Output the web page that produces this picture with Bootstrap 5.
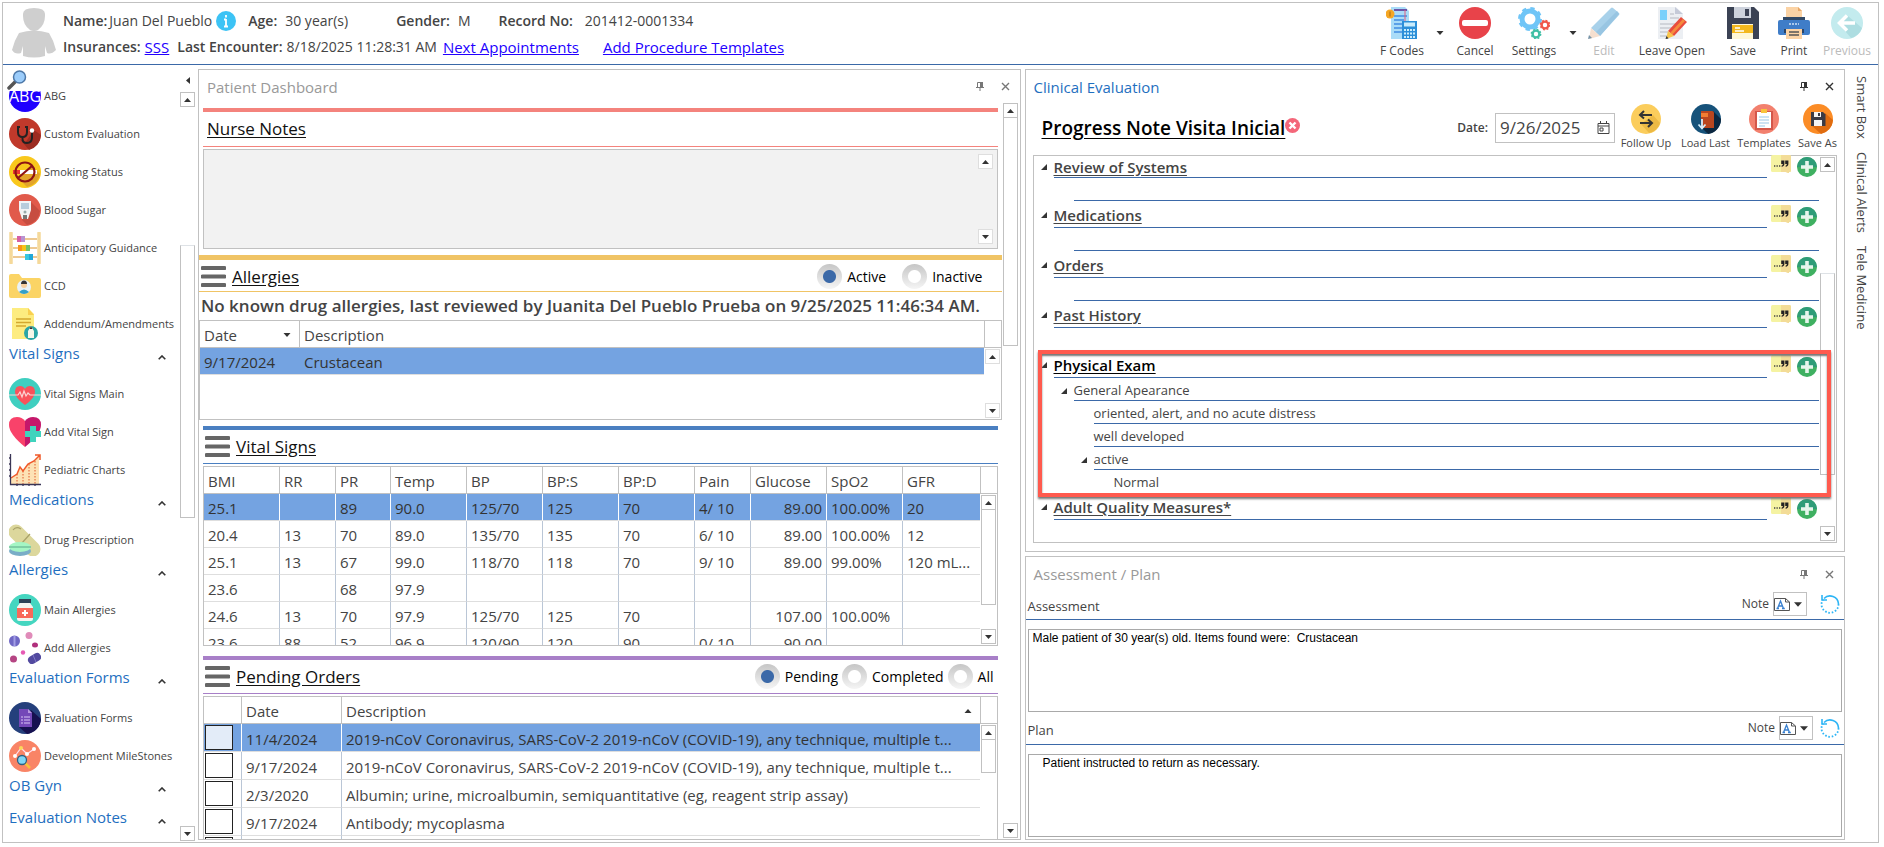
<!DOCTYPE html>
<html lang="en">
<head>
<meta charset="utf-8">
<meta name="viewport" content="width=device-width, initial-scale=1">
<title>Clinical Evaluation</title>
<link href="https://cdn.jsdelivr.net/npm/bootstrap@5.3.0/dist/css/bootstrap.min.css" rel="stylesheet">
<style>
:root{--edge:#c1c1c1;--rule:#3b69a8;--sel:#74a3e1;--ink:#444}
body{font-family:"Open Sans","Noto Sans",sans-serif;font-size:15px;line-height:20px;color:var(--ink);background:#fff}
button{color:inherit;background:none;border:0;padding:0;font:inherit}
svg{display:block;flex:none}
.app{height:calc(100vh - 6px);margin:2px 5px 4px 2px;border:1px solid var(--edge);overflow:hidden}
.edge{border:1px solid var(--edge)}
.semi{font-weight:600}
/* header */
.topbar{height:62px;border-bottom:1px solid var(--rule)}
.patient{font-size:14px;white-space:nowrap;padding:5px 0 0 6px}
.patient a{color:#20f;font-size:15px}
.patient .line{height:26px}
.tools{display:grid;grid-template-columns:56px 20px 50px 68px 10px 52px 84px 58px 44px 62px}
.tools button{font-size:12px;line-height:16px;white-space:nowrap}
.tools .off{color:#bbb}
/* sidebar */
.side{width:195px}
.side-list{font-size:11px;line-height:14px;overflow:hidden}
.side-item{display:flex;align-items:center;gap:3px;height:38px;padding-left:6px;color:var(--ink);text-decoration:none;white-space:nowrap}
.side-head{display:flex;width:100%;height:32px;padding:0 14px 0 6px;justify-content:space-between;color:#1f6fc0;font-size:15px;line-height:20px}
.side-head svg{margin-top:12px}
.scrolled{margin-top:-14px}
/* scroll bars */
.sbar{width:15px;display:flex;flex-direction:column}
.sbar button{height:15px;border:1px solid var(--edge);display:flex;align-items:center;justify-content:center;background:#fff}
.thumb{border:1px solid var(--edge);border-top:0;background:#fff}
.sbar.faint button{border-color:#dedede}
/* dashboard */
.panel-title{height:33px;padding:0 10px 0 8px;display:flex;align-items:center;color:#999}
.panel-title .tool-x{margin-left:17px}
.panel-title.on{color:#1f6fc0}.panel-title.on button{color:#333}
.panel-title button{color:#777}
.sec{margin:0 4px}
.bar-top{height:4px}
.sec-title{height:34px;border-bottom:1px solid;display:flex;align-items:center}
.sec-title h2{font-size:17px;line-height:22px;margin:0;color:#111;font-weight:400;text-decoration:underline;text-underline-offset:2px}
.sec-title svg{margin:0 6px 0 2px}
.sec-title label{color:#000;font-size:14px;margin-left:5px}
.ring{appearance:none;width:25px;height:25px;border-radius:50%;margin:0;background:radial-gradient(circle,#fff 0 6px,transparent 7px),linear-gradient(#c6c6c6,#f5f5f5)}
.ring:checked{background:radial-gradient(circle,#3b69a8 0 6px,transparent 7px),linear-gradient(#c6c6c6,#f5f5f5)}
.c-red{color:#f4837d}.b-red{background:#f4837d}
.c-gold{color:#f0c465}.b-gold{background:#f0c465;height:5px}
.c-blue{color:#4a7fc1}.b-blue{background:#4a7fc1}
.c-violet{color:#a87fc8}.b-violet{background:#a87fc8}
.notes{height:100px;background:#f2f2f2;margin-top:2px}
.notes textarea{resize:none;background:none;border:0;outline:0}
.data-grid{table-layout:fixed;margin:0;color:var(--ink);border-collapse:separate;border-spacing:0}
.data-grid>:not(caption)>*>*{padding:2px 4px 0;height:27px;line-height:22px;border:0;border-bottom:1px solid #dedede;border-right:1px solid #bac6d6;white-space:nowrap;overflow:hidden;background:none;color:inherit;box-shadow:none;font-weight:400;vertical-align:middle}
.data-grid>thead>tr>th{border-color:var(--edge)!important}
.data-grid>:not(caption)>*>:last-child{border-right:0}
.data-grid .picked{background:var(--sel);color:#333}
.data-grid .picked>*{border-right-color:#fff!important}
.sb-col{width:17px;flex:none;display:flex;flex-direction:column;align-items:center}
.sb-head{height:27px;width:100%;border:solid var(--edge);border-width:0 0 1px 1px}
.plain-rows td{border-right:0!important}
.orders>tbody>tr>*{height:28px!important}
.orders .pick{padding:0 0 0 1px!important}
.pick input{appearance:none;display:block;width:28px;height:25px;border:1px solid #222;background:#fff;margin:0}
.picked .pick input{background:#e3ecf8}
/* evaluation */
.note-row{height:52px;padding:0 3px 3px 16px}
.note-title{font-size:19px;line-height:24px;margin:0;color:#000;font-weight:600;text-decoration:underline;text-underline-offset:3px}
.date-box{width:120px;height:30px}
.date-box input{width:100%;min-width:0;border:0;outline:0;padding:0 0 0 4px;font-size:17px;color:var(--ink)}
.mini button{font-size:11px;line-height:16px;white-space:nowrap;display:flex;flex-direction:column;align-items:center;gap:1px}
.tree{position:relative;height:388px}
.tree ul{list-style:none;margin:0;padding:0}
.node-h{height:27px;display:flex;padding-left:7px}
.node-h h3{font-size:15px;line-height:20px;font-weight:600;color:var(--ink);margin:0;text-decoration:underline;text-underline-offset:2px}
.node-line{flex:1;border-bottom:1px solid var(--rule);margin:0 4px 0 7px;display:flex;align-items:center;padding-top:2px}
.node-h .tri{align-self:center}
.node-h .acts{display:flex;gap:6px;align-items:flex-end;width:48px;padding-bottom:1px}
.node-h.first{height:22px}
.node-h.first .node-line{padding-top:0}
.node-h.first h3{line-height:18px}
.node{height:23px;display:flex;align-items:center;font-size:13px}
.node .tri{margin-top:3px}
.node .ln{flex:1;align-self:stretch;margin-left:7px;border-bottom:1px solid var(--rule);line-height:24px}
.lv1{padding-left:40px}.lv1.tw{padding-left:27px}
.lv2{padding-left:60px}.lv2.tw{padding-left:47px}
.lv3{padding-left:80px}
.lv1:not(.tw) .ln,.lv2:not(.tw) .ln,.lv3 .ln{margin-left:0}
.node .bare{border:0}
.focus-group{position:relative}
.focus-frame{position:absolute;inset:-1px -12px -4px 4px;border:4px solid #ff5a4e;box-shadow:0 2px 2px #777,inset 0 2px 2px #777;pointer-events:none}
/* assessment */
.ap-head{border-bottom:1px solid var(--rule);font-size:13px;padding:0 4px 0 2px}
.ap-box{height:83px;margin:9px 2px 0;border:1px solid #a9a9a9;display:flex}
.ap-box textarea{resize:none;border:0;outline:0;width:100%;font:12px/14px "Liberation Sans",Arial,sans-serif;color:#000;padding:1px 4px;overflow:hidden}
.pickfont{height:24px;width:34px}
.tabs-v{width:33px;writing-mode:vertical-rl;font-size:13px;line-height:33px;gap:13px;padding-top:11px}
</style>
</head>
<body>
<svg width="0" height="0" class="position-absolute" aria-hidden="true">
<defs>
<symbol id="up" viewBox="0 0 7 4"><path d="M0 4h7L3.500 0z" fill="#333"/></symbol>
<symbol id="dn" viewBox="0 0 7 4"><path d="M0 0h7L3.500 4z" fill="#333"/></symbol>
<symbol id="chev" viewBox="0 0 8 5"><path d="M.7 4.300 4 1l3.300 3.300" fill="none" stroke="#333" stroke-width="1.600"/></symbol>
<symbol id="pin" viewBox="0 0 8 9"><path d="M1.500.5h5v5h-5zM0 5.500h8M4 6v3" fill="none" stroke="currentColor"/><path d="M4 0h3v5H4z" fill="currentColor"/></symbol>
<symbol id="ex" viewBox="0 0 9 9"><path d="M1 1l7 7M8 1 1 8" fill="none" stroke="currentColor" stroke-width="1.400"/></symbol>
<symbol id="burger" viewBox="0 0 25 21"><path d="M1.500 2h22M1.500 10.500h22M1.500 19h22" stroke="#666" stroke-width="4" stroke-linecap="round"/></symbol>
<symbol id="tri" viewBox="0 0 6 6"><path d="M6 0v6H0z" fill="#333"/></symbol>
<symbol id="note" viewBox="0 0 20 18"><rect width="20" height="17" rx="1.500" fill="#f5f3a2"/><path d="M10 0h8.500Q20 0 20 1.500v14q0 1.500-1.500 1.500H18v1.500L14.500 17H10z" fill="#f3dc97"/><path d="M3 11h1.300M5.500 11h1.300M8 11h1.300" stroke="#444" stroke-width="1.300"/><path d="M10.200 5.500h3.200v3.200q0 2.600-2.800 3.100v-1.100q1.300-.4 1.300-1.700h-1.700zM14.200 5.500h3.200v3.200q0 2.600-2.800 3.100v-1.100q1.300-.4 1.300-1.700h-1.700z" fill="#222"/></symbol>
<symbol id="plus" viewBox="0 0 20 20"><circle cx="10" cy="10" r="10" fill="#3fb061"/><path d="M0 10a10 10 0 0 1 20 0z" fill="#2f9c78"/><path d="M10 4v12M4 10h12" stroke="#e6f5ec" stroke-width="3.600"/></symbol>
<symbol id="redo" viewBox="0 0 20 20"><path d="M4 4.500A8.500 8.500 0 0 1 18.500 10" fill="none" stroke="#2eb5f5" stroke-width="1.600"/><path d="M18.500 10A8.500 8.500 0 1 1 3 5.500" fill="none" stroke="#2eb5f5" stroke-width="1.800" stroke-dasharray="1.600 1.800"/><path d="M2 1v5h5" fill="none" stroke="#2eb5f5" stroke-width="1.600"/></symbol>
<symbol id="fontpg" viewBox="0 0 16 13"><path d="M.5.500h11l4 3.500v8.500H.5z" fill="#fff" stroke="#555"/><path d="M11.500.5V4h4" fill="none" stroke="#555"/><path d="M3.500 10.500 6.500 3l3 7.500M4.700 8h3.600M2.500 10.500h2.500M8 10.500h2.800" fill="none" stroke="#3a80cf" stroke-width="1.300"/></symbol>
</defs>
</svg>
<div class="app d-flex flex-column">
<header class="topbar d-flex flex-shrink-0">
<svg class="ms-2 mt-1" width="46" height="52" viewBox="0 0 46 52"><path d="M12 7q0-6 11-6t11 6v2q0 9-7 14-4 2-8 0-7-5-7-14z" fill="#cfcfcf"/><path d="M8 26q15-5 30 0 5 8 7 17-5 5-9 3l-2-7v10q-11 3-22 0V39l-2 7Q4 48 1 43 3 34 8 26z" fill="#cfcfcf"/></svg>
<div class="patient">
<div class="line d-flex align-items-center"><span class="semi">Name:</span><span style="margin-left:2px">Juan Del Pueblo</span>
<svg class="ms-1" width="20" height="20" viewBox="0 0 20 20"><circle cx="10" cy="10" r="10" fill="#3cc3f5"/><path d="M10 4v2.500M10 8v7.500M8 8.500h2M8 15.500h4" stroke="#fff" stroke-width="1.800"/></svg>
<span class="semi ms-2 ps-1">Age:</span><span class="ms-2">30 year(s)</span>
<span class="semi ms-5">Gender:</span><span class="ms-2">M</span>
<span class="semi ms-4 ps-1">Record No:</span><span class="ms-2 ps-1">201412-0001334</span></div>
<div class="line d-flex align-items-center"><span class="semi">Insurances:</span><a class="ms-1" href="#">SSS</a><span class="semi ms-2">Last Encounter:</span><span class="ms-1">8/18/2025 11:28:31 AM</span><a style="margin-left:6px" href="#">Next Appointments</a><a class="ms-4" href="#">Add Procedure Templates</a></div>
</div>
<nav class="tools ms-auto align-items-start pt-1" aria-label="Actions">
<button class="d-flex flex-column align-items-center gap-1"><svg width="32" height="32" viewBox="0 0 32 32"><path d="M5 0h14l4 4v28H5z" fill="#a9dcf8"/><path d="M8 2h13v2H8z" fill="#6a55a8"/><path d="M8 9h13M8 13h10M8 17h8M8 21h8M8 25h8" stroke="#5aa0e8" stroke-width="2"/><path d="M19 3v14" stroke="#e05f80"/><circle cx="4" cy="7" r="4.500" fill="#f5a623"/><path d="M4 4.500v5" stroke="#a86a10"/><path d="M16 14h15v18H16z" fill="#2c8fd8"/><path d="M18 15.500h11v4H18z" fill="#c9ecfc"/><path d="M18 23h11M18 26.500h11M18 30h11" stroke="#c9ecfc" stroke-width="2" stroke-dasharray="2 1"/></svg>F Codes</button>
<button aria-label="More codes"><svg class="mx-auto mt-4" width="8" height="4"><use href="#dn"/></svg></button>
<button class="d-flex flex-column align-items-center gap-1"><svg width="32" height="32" viewBox="0 0 32 32"><circle cx="16" cy="16" r="16" fill="#e8434a"/><rect x="3" y="13" width="26" height="6" rx="2" fill="#fff"/></svg>Cancel</button>
<button class="d-flex flex-column align-items-center gap-1"><svg width="32" height="32" viewBox="0 0 32 32"><g fill="none"><circle cx="12" cy="12" r="8" stroke="#6fc5f7" stroke-width="5"/><circle cx="12" cy="12" r="10.500" stroke="#6fc5f7" stroke-width="3" stroke-dasharray="4.200 4.050"/><circle cx="27" cy="18" r="3.400" stroke="#f0574a" stroke-width="2.400"/><circle cx="27" cy="18" r="4.700" stroke="#f0574a" stroke-width="1.400" stroke-dasharray="1.850 1.840"/><circle cx="18" cy="27" r="3.400" stroke="#40bfa5" stroke-width="2.400"/><circle cx="18" cy="27" r="4.700" stroke="#40bfa5" stroke-width="1.400" stroke-dasharray="1.850 1.840"/></g></svg>Settings</button>
<button aria-label="More settings"><svg class="mx-auto mt-4" width="8" height="4"><use href="#dn"/></svg></button>
<button class="off d-flex flex-column align-items-center gap-1" disabled><svg width="32" height="32" viewBox="0 0 32 32"><path d="M3 21 23 1q1-1 2 0l6 5q1 1 0 2L12 29z" fill="#a8d1ea"/><path d="m8 25 21-21 2 3-19 22z" fill="#98c5e2"/><path d="m3 21 9 8-11 3z" fill="#f5dfcf"/><path d="m1 28 3 3-4 1z" fill="#7593a8"/></svg>Edit</button>
<button class="d-flex flex-column align-items-center gap-1"><svg width="32" height="32" viewBox="0 0 32 32"><path d="M2 0h18l7 7v25H2z" fill="#eceff3"/><path d="M19 0l8 7h-8z" fill="#c5cad8"/><path d="M4 3h7v10H4z" fill="#7ad0fb"/><path d="M14 7h4M14 11h9M4 17h16M4 21h13M4 25h8M4 29h7" stroke="#c8cbd2" stroke-width="1.500"/><path d="M12 24 25 10l6 5-13 14z" fill="#e84c3d"/><path d="m14 26 13-14 2 2-13 14z" fill="#f58b3d"/><path d="m12 24 6 5-8 3z" fill="#f8c54a"/><path d="m10.500 29 2 2.500-3 .5z" fill="#333"/></svg>Leave Open</button>
<button class="d-flex flex-column align-items-center gap-1"><svg width="32" height="32" viewBox="0 0 32 32"><path d="M0 0h27l5 5v27H0z" fill="#3b4254"/><path d="M7 0h17v11H7z" fill="#cdd2dc"/><path d="M18 2h4v7h-4z" fill="#3b4254"/><path d="M5 17h21v15H5z" fill="#fff7d6"/><path d="M5 18h21v8H5z" fill="#f3b81d"/><path d="M8 21h5M8 24h9" stroke="#fff" stroke-width="1.500"/></svg>Save</button>
<button class="d-flex flex-column align-items-center gap-1"><svg width="32" height="32" viewBox="0 0 32 32"><path d="M8 0h12l4 4v10H8z" fill="#fbd3a5"/><path d="M20 0v4h4z" fill="#e8a868"/><path d="M5 10h22v5H5z" fill="#334a66"/><path d="M2 13h28q2 0 2 2v11q0 2-2 2H2q-2 0-2-2V15q0-2 2-2z" fill="#3f7dc8"/><path d="M6 22h20v4H6z" fill="#2a4468"/><path d="M8 22h16v10H8z" fill="#fbd3a5"/><path d="M11 25h10M11 28h10" stroke="#555" stroke-width="1.500"/><path d="M11 17h10" stroke="#cfe2f7" stroke-width="1.500" stroke-dasharray="2 1"/></svg>Print</button>
<button class="off d-flex flex-column align-items-center gap-1" disabled><svg width="32" height="32" viewBox="0 0 32 32"><circle cx="16" cy="16" r="16" fill="#c3ebee"/><path d="m17 9 14 12a16 16 0 0 1-11 10L8 17z" fill="#addde1"/><path d="M24 16H9M16 8.500 8.500 16l7.500 7.500" fill="none" stroke="#fff" stroke-width="3.500"/></svg>Previous</button>
</nav>
</header>

<div class="d-flex flex-fill" style="min-height:0">
<aside class="side d-flex flex-column flex-shrink-0">
<div class="d-flex justify-content-between ps-1 pt-1 flex-shrink-0" style="height:26px">
<button aria-label="Search"><svg width="20" height="20" viewBox="0 0 20 20"><path d="m2 18 6-6" stroke="#555" stroke-width="3.500" stroke-linecap="round"/><circle cx="12.500" cy="7" r="6" fill="#9ccdfb" stroke="#4d78a8" stroke-width="1.500"/></svg></button>
<button class="pe-2" aria-label="Collapse"><svg width="4" height="7" viewBox="0 0 4 7"><path d="M4 0v7L0 3.500z" fill="#333"/></svg></button>
</div>
<div class="d-flex flex-fill" style="min-height:0">
<nav class="side-list flex-fill"><div class="scrolled">
<a class="side-item" href="#"><svg width="32" height="32" viewBox="0 0 32 32"><circle cx="16" cy="16" r="16" fill="#1f00ff"/><text x="16" y="22" text-anchor="middle" font-size="16" fill="#fff">ABG</text></svg>ABG</a>
<a class="side-item" href="#"><svg width="32" height="32" viewBox="0 0 32 32"><circle cx="16" cy="16" r="16" fill="#c0392b"/><path d="m10 20 6 5 9-13 7 5a16 16 0 0 1-12 15z" fill="#9c2c21"/><path d="M11 9H9v5q0 5 4.500 5T18 14V9h-2M13.500 19v2q0 4 4.500 4t5-5v-6" fill="none" stroke="#222" stroke-width="2"/><circle cx="23" cy="12.500" r="2.200" fill="#fff"/></svg>Custom Evaluation</a>
<a class="side-item" href="#"><svg width="32" height="32" viewBox="0 0 32 32"><circle cx="16" cy="16" r="16" fill="#f9c81c"/><path d="m22 9 9 9a16 16 0 0 1-13 13l-8-8z" fill="#e2a42a"/><path d="M4 14h7v4H4z" fill="#e33"/><path d="M11 14h17v4H11z" fill="#fff"/><g fill="none" stroke="#8e1414" stroke-width="2.200"><circle cx="16" cy="16" r="9.500"/><path d="m9 22 14-12"/></g></svg>Smoking Status</a>
<a class="side-item" href="#"><svg width="32" height="32" viewBox="0 0 32 32"><circle cx="16" cy="16" r="16" fill="#e15a4b"/><path d="m22 8 9 9a16 16 0 0 1-13 14l-5-5z" fill="#c74d40"/><path d="M10 7h12v9l-3 9h-6l-3-9z" fill="#f2f3f5"/><path d="M12 9h8v6h-8z" fill="#b8ccdc"/><circle cx="16" cy="18" r="1.500" fill="#9aa"/><path d="M14 21h4v4h-4z" fill="#777"/></svg>Blood Sugar</a>
<a class="side-item" href="#"><svg width="32" height="32" viewBox="0 0 32 32"><path d="M2 1v30M30 1v30" stroke="#f5d99a" stroke-width="3.500" stroke-linecap="round"/><path d="M4 7h24M4 16h24M4 25h24" stroke="#e8b870" stroke-width="1.500"/><path d="M8 4h4v6H8z" fill="#d65fa5"/><path d="M12 4h4v6h-4z" fill="#b893d0"/><path d="M9 13h4v6H9z" fill="#f7941d"/><path d="M13 13h4v6h-4z" fill="#f5c518"/><path d="M17 13h4v6h-4z" fill="#75c26a"/><path d="M16 22h4v6h-4z" fill="#38c6e0"/><path d="M20 22h4v6h-4z" fill="#20a8d8"/></svg>Anticipatory Guidance</a>
<a class="side-item" href="#"><svg width="32" height="32" viewBox="0 0 32 32"><path d="M0 6q0-2 2-2h8l3 4h17q2 0 2 2v16q0 2-2 2H2q-2 0-2-2z" fill="#fbd465"/><circle cx="15" cy="17" r="7" fill="#e8f2f7"/><circle cx="15" cy="15" r="3" fill="#f5cfa0"/><path d="M12 14q0-3.500 3-3.500t3 3.500z" fill="#333"/><path d="M10 22q5-5 10 0-5 4-10 0z" fill="#36a0c8"/></svg>CCD</a>
<a class="side-item" href="#"><svg width="32" height="32" viewBox="0 0 32 32"><path d="M3 0h16l6 6v25H3z" fill="#fdec80"/><path d="M19 0v7h6z" fill="#f9cf50"/><path d="M7 11h15M7 14.500h15M7 18h10" stroke="#d3a82e" stroke-width="1.500"/><circle cx="22" cy="25" r="7" fill="#2aa5a5"/><path d="m22 18 3 5v7h-6v-7z" fill="#f6f6e8"/><path d="m22 18 1.500 3h-3z" fill="#333"/></svg>Addendum/Amendments</a>
<button class="side-head">Vital Signs<svg width="8" height="5"><use href="#chev"/></svg></button>
<a class="side-item" href="#"><svg width="32" height="32" viewBox="0 0 32 32"><circle cx="16" cy="16" r="16" fill="#3fcfc0"/><path d="M16 27Q6 20 6 14q0-6 5-6 3.500 0 5 3 1.500-3 5-3 5 0 5 6 0 6-10 13z" fill="#f9525b"/><path d="M0 17h9l2-3 2 5 2-6 2 5 2-3 2 2h11" fill="none" stroke="#fbd5d5" stroke-width="1.200"/></svg>Vital Signs Main</a>
<a class="side-item" href="#"><svg width="32" height="32" viewBox="0 0 32 32"><path d="M16 31Q0 18 0 9q0-8 8-8 5 0 8 4z" fill="#f9426a"/><path d="M16 31q16-13 16-22 0-8-8-8-5 0-8 4z" fill="#c4176b"/><path d="M21 10h6v5h5v6h-5v5h-6v-5h-5v-6h5z" fill="#40d3bd"/></svg>Add Vital Sign</a>
<a class="side-item" href="#"><svg width="32" height="32" viewBox="0 0 32 32"><path d="m2 24 6-4 3-7 3 4 5-7 6-3 5-6v30H2z" fill="#fde2b5"/><path d="M8 20v10M14 17v13M20 10v20M26 7v23" stroke="#e05a2a" stroke-dasharray="1.500 1.500"/><path d="m2 24 6-4 3-7 3 4 5-7 6-3 6-6M26 1h5v5" fill="none" stroke="#f0592a" stroke-width="1.500"/><path d="M1.500 0v30.500H32M0 4h2M0 10h2M0 16h2M0 22h2M8 30v2M14 30v2M20 30v2M26 30v2" fill="none" stroke="#3a3556" stroke-width="1.300"/></svg>Pediatric Charts</a>
<button class="side-head">Medications<svg width="8" height="5"><use href="#chev"/></svg></button>
<a class="side-item" href="#"><svg width="32" height="32" viewBox="0 0 32 32"><path d="m7 8 17 17" stroke="#dcd79c" stroke-width="15" stroke-linecap="round"/><path d="m21 10-8 9M4 6q3-4 8-1" fill="none" stroke="#a8a268" stroke-width="1.200"/><ellipse cx="11" cy="27" rx="11" ry="5" fill="#79adc7"/><ellipse cx="11" cy="23" rx="11" ry="5" fill="#a4f5c4"/><path d="M0 23h22" stroke="#5aa888"/></svg>Drug Prescription</a>
<button class="side-head">Allergies<svg width="8" height="5"><use href="#chev"/></svg></button>
<a class="side-item" href="#"><svg width="32" height="32" viewBox="0 0 32 32"><circle cx="16" cy="16" r="16" fill="#45d6c0"/><path d="M10 5h12v4H10z" fill="#2f4257"/><path d="M11 9h10l3 4v12q0 2-2 2H10q-2 0-2-2V13z" fill="#f5f5f0"/><path d="M8 14h16v10H8z" fill="#f9695a"/><path d="M16 16v6M13 19h6" stroke="#fff" stroke-width="2"/></svg>Main Allergies</a>
<a class="side-item" href="#"><svg width="32" height="32" viewBox="0 0 32 32"><circle cx="5.500" cy="9" r="5.500" fill="#6f67c4"/><path d="M5.500 4v10" stroke="#a39fe5" stroke-width="2"/><circle cx="20" cy="3.500" r="3.500" fill="#e08bb9"/><ellipse cx="26" cy="13" rx="3" ry="2.500" fill="#b0307c"/><circle cx="14" cy="20.500" r="2.200" fill="#e65ab4"/><circle cx="4.500" cy="27" r="3.500" fill="#b54583"/><path d="m23 28 5-3" stroke="#524a9f" stroke-width="8" stroke-linecap="round"/><path d="m24 23 3 7" stroke="#8078c8"/></svg>Add Allergies</a>
<button class="side-head">Evaluation Forms<svg width="8" height="5"><use href="#chev"/></svg></button>
<a class="side-item" href="#"><svg width="32" height="32" viewBox="0 0 32 32"><circle cx="16" cy="16" r="16" fill="#25407c"/><path d="m22 8 10 9a16 16 0 0 1-14 15l-8-7z" fill="#161150"/><path d="M10 7h9l4 4v14H10z" fill="#7448b8"/><path d="M19 7v4h4z" fill="#b898e0"/><path d="M12 15h2M12 18h2M12 21h2M15 15h6M15 18h6M15 21h6" stroke="#d9c5f5"/></svg>Evaluation Forms</a>
<a class="side-item" href="#"><svg width="32" height="32" viewBox="0 0 32 32"><circle cx="16" cy="16" r="16" fill="#f98466"/><path d="m6 16 6-8 6 6 7-5" fill="none" stroke="#fde" stroke-width="1.200"/><g fill="#fff"><circle cx="6" cy="16" r="2"/><circle cx="18" cy="14" r="2"/><circle cx="25" cy="9" r="2"/></g><circle cx="12" cy="8" r="2" fill="#fcd95a"/><path d="m16 23 5 5" stroke="#f8c13a" stroke-width="2.500"/><circle cx="13" cy="20" r="4.500" fill="#7fd6f7" stroke="#2d5f80" stroke-width="1.300"/></svg>Development MileStones</a>
<button class="side-head">OB Gyn<svg width="8" height="5"><use href="#chev"/></svg></button>
<button class="side-head">Evaluation Notes<svg width="8" height="5"><use href="#chev"/></svg></button>
<a class="side-item" href="#" aria-label="Notes"><svg width="32" height="32" viewBox="0 0 32 32"><path d="M3 0h17v32H3z" fill="#fce98a"/></svg></a>
</div></nav>
<div class="sbar flex-shrink-0" style="margin:1px 3px 1px 0">
<button aria-label="Up"><svg width="7" height="4"><use href="#up"/></svg></button>
<div style="flex:139"></div><div class="thumb border-top" style="flex:272"></div><div style="flex:309"></div>
<button aria-label="Down"><svg width="7" height="4"><use href="#dn"/></svg></button></div>
</div>
</aside>

<main class="d-flex flex-fill gap-1" style="min-width:0;padding:4px 0 2px">
<section class="edge d-flex flex-column" style="flex:1 1 0;min-width:0">
<div class="panel-title flex-shrink-0"><span class="me-auto">Patient Dashboard</span><button aria-label="Pin"><svg width="8" height="9"><use href="#pin"/></svg></button><button class="tool-x" aria-label="Close"><svg width="9" height="9"><use href="#ex"/></svg></button></div>
<div class="d-flex flex-fill" style="min-height:0">
<div class="flex-fill overflow-hidden d-flex flex-column" style="min-width:0;padding-top:5px">
<div class="sec"><div class="bar-top b-red"></div><div class="sec-title c-red ps-1" style="height:35px"><h2>Nurse Notes</h2></div>
<div class="notes edge d-flex"><textarea class="flex-fill" aria-label="Nurse notes" readonly></textarea><div class="sbar faint justify-content-between m-1 my-1"><button aria-label="Up"><svg width="7" height="4"><use href="#up"/></svg></button><button aria-label="Down"><svg width="7" height="4"><use href="#dn"/></svg></button></div></div></div>
<div style="margin-top:6px"><div class="bar-top b-gold"></div><div class="sec-title c-gold" style="height:32px;padding-top:2px"><svg width="25" height="21"><use href="#burger"/></svg><h2 class="me-auto">Allergies</h2>
<input class="ring" type="radio" name="al" id="al1" checked><label for="al1" class="me-3">Active</label><input class="ring" type="radio" name="al" id="al2"><label for="al2" style="margin-right:19px">Inactive</label></div>
<div class="semi text-nowrap" style="font-size:17px;line-height:28px;padding-left:2px">No known drug allergies, last reviewed by Juanita Del Pueblo Prueba on 9/25/2025 11:46:34 AM.</div>
<div class="edge d-flex" style="height:100px"><div class="flex-fill"><table class="table data-grid plain-rows"><colgroup><col style="width:100px"><col></colgroup><thead><tr><th><span class="d-flex align-items-center justify-content-between pe-1">Date<svg width="8" height="4"><use href="#dn"/></svg></span></th><th>Description</th></tr></thead><tbody><tr class="picked"><td>9/17/2024</td><td>Crustacean</td></tr></tbody></table></div>
<div class="sb-col"><div class="sb-head"></div><div class="sbar faint flex-fill justify-content-between" style="padding:1px 0"><button aria-label="Up"><svg width="7" height="4"><use href="#up"/></svg></button><button aria-label="Down"><svg width="7" height="4"><use href="#dn"/></svg></button></div></div></div></div>
<div class="sec" style="margin-top:6px"><div class="bar-top b-blue"></div><div class="sec-title c-blue"><svg width="25" height="21"><use href="#burger"/></svg><h2>Vital Signs</h2></div>
<div class="edge d-flex overflow-hidden" style="height:180px;margin-top:2px"><div class="flex-fill"><table class="table data-grid"><colgroup><col style="width:76px"><col style="width:56px"><col style="width:55px"><col style="width:76px"><col style="width:76px"><col style="width:76px"><col style="width:76px"><col style="width:56px"><col style="width:76px"><col style="width:76px"><col style="width:77px"></colgroup>
<thead><tr><th>BMI</th><th>RR</th><th>PR</th><th>Temp</th><th>BP</th><th>BP:S</th><th>BP:D</th><th>Pain</th><th>Glucose</th><th>SpO2</th><th>GFR</th></tr></thead><tbody>
<tr class="picked"><td>25.1</td><td></td><td>89</td><td>90.0</td><td>125/70</td><td>125</td><td>70</td><td>4/ 10</td><td class="text-end">89.00</td><td>100.00%</td><td>20</td></tr>
<tr><td>20.4</td><td>13</td><td>70</td><td>89.0</td><td>135/70</td><td>135</td><td>70</td><td>6/ 10</td><td class="text-end">89.00</td><td>100.00%</td><td>12</td></tr>
<tr><td>25.1</td><td>13</td><td>67</td><td>99.0</td><td>118/70</td><td>118</td><td>70</td><td>9/ 10</td><td class="text-end">89.00</td><td>99.00%</td><td>120 mL...</td></tr>
<tr><td>23.6</td><td></td><td>68</td><td>97.9</td><td></td><td></td><td></td><td></td><td></td><td></td><td></td></tr>
<tr><td>24.6</td><td>13</td><td>70</td><td>97.9</td><td>125/70</td><td>125</td><td>70</td><td></td><td class="text-end">107.00</td><td>100.00%</td><td></td></tr>
<tr><td>23.6</td><td>88</td><td>52</td><td>96.9</td><td>120/90</td><td>120</td><td>90</td><td>0/ 10</td><td class="text-end">90.00</td><td></td><td></td></tr>
</tbody></table></div>
<div class="sb-col"><div class="sb-head flex-shrink-0"></div><div class="sbar flex-fill" style="padding:1px 0"><button aria-label="Up"><svg width="7" height="4"><use href="#up"/></svg></button><div class="thumb" style="flex:96"></div><div style="flex:24"></div><button aria-label="Down"><svg width="7" height="4"><use href="#dn"/></svg></button></div></div></div></div>
<div class="sec d-flex flex-column flex-fill" style="margin-top:10px;min-height:0"><div class="bar-top b-violet flex-shrink-0"></div><div class="sec-title c-violet flex-shrink-0"><svg width="25" height="21"><use href="#burger"/></svg><h2 class="me-auto">Pending Orders</h2>
<input class="ring" type="radio" name="po" id="po1" checked><label for="po1" class="me-1">Pending</label><input class="ring" type="radio" name="po" id="po2"><label for="po2" class="me-1" >Completed</label><input class="ring" type="radio" name="po" id="po3"><label for="po3" class="me-1">All</label></div>
<div class="edge border-bottom-0 d-flex overflow-hidden flex-fill" style="margin-top:2px;min-height:0"><div class="flex-fill"><table class="table data-grid orders"><colgroup><col style="width:38px"><col style="width:100px"><col></colgroup>
<thead><tr><th></th><th>Date</th><th><span class="d-flex align-items-center justify-content-between pe-1">Description<svg width="8" height="4"><use href="#up"/></svg></span></th></tr></thead><tbody>
<tr class="picked"><td class="pick"><input type="checkbox" aria-label="Select 11/4/2024"></td><td>11/4/2024</td><td>2019-nCoV Coronavirus, SARS-CoV-2 2019-nCoV (COVID-19), any technique, multiple t...</td></tr>
<tr><td class="pick"><input type="checkbox" aria-label="Select 9/17/2024"></td><td>9/17/2024</td><td>2019-nCoV Coronavirus, SARS-CoV-2 2019-nCoV (COVID-19), any technique, multiple t...</td></tr>
<tr><td class="pick"><input type="checkbox" aria-label="Select 2/3/2020"></td><td>2/3/2020</td><td>Albumin; urine, microalbumin, semiquantitative (eg, reagent strip assay)</td></tr>
<tr><td class="pick"><input type="checkbox" aria-label="Select 9/17/2024"></td><td>9/17/2024</td><td>Antibody; mycoplasma</td></tr>
<tr><td class="pick"><input type="checkbox" aria-label="Select order"></td><td></td><td></td></tr>
</tbody></table></div>
<div class="sb-col"><div class="sb-head flex-shrink-0"></div><div class="sbar" style="padding-top:1px"><button aria-label="Up"><svg width="7" height="4"><use href="#up"/></svg></button><div class="thumb" style="height:33px"></div></div></div></div></div>
</div>
<div class="sbar flex-shrink-0" style="margin:0 2px 1px 1px"><button aria-label="Up"><svg width="7" height="4"><use href="#up"/></svg></button><div class="thumb" style="flex:228"></div><div style="flex:478"></div><button aria-label="Down"><svg width="7" height="4"><use href="#dn"/></svg></button></div>
</div>
</section>

<div class="d-flex flex-column gap-1" style="flex:1 1 0;min-width:0">
<section class="edge" style="height:483px">
<div class="panel-title on" ><span class="me-auto">Clinical Evaluation</span><button aria-label="Pin"><svg width="8" height="9"><use href="#pin"/></svg></button><button class="tool-x" aria-label="Close"><svg width="9" height="9"><use href="#ex"/></svg></button></div>
<div class="note-row d-flex align-items-center">
<h1 class="note-title">Progress Note Visita Inicial</h1><button class="me-auto mb-1" aria-label="Remove note"><svg width="15" height="15" viewBox="0 0 15 15"><circle cx="7.500" cy="7.500" r="7.500" fill="#f4677a"/><path d="m4.500 4.500 6 6m0-6-6 6" stroke="#fff" stroke-width="2.400"/></svg></button>
<label class="semi" for="dt" style="font-size:12px;margin-right:7px">Date:</label>
<div class="edge date-box d-flex align-items-center"><input id="dt" type="text" value="9/26/2025"><svg width="13" height="13" class="me-1" viewBox="0 0 13 13"><path d="M1 2.500h11v10H1zM1 5h11M3.500 0v3M9.500 0v3" fill="none" stroke="#444"/><path d="M3 7h3v3H3z" fill="none" stroke="#444"/></svg></div>
<div class="mini d-flex">
<button style="width:62px"><svg width="30" height="30" viewBox="0 0 30 30"><circle cx="15" cy="15" r="15" fill="#fbcd5c"/><path d="m22 11 7 8a15 15 0 0 1-11 10l-8-9z" fill="#ecb944"/><path d="M21 11H9m4-4-4 4 4 3.500M9 19h12m-4-3.500L21 19l-4 4" fill="none" stroke="#333" stroke-width="2"/></svg>Follow Up</button>
<button style="width:57px"><svg width="30" height="30" viewBox="0 0 30 30"><circle cx="15" cy="15" r="15" fill="#16527a"/><path d="m22 7 8 8a15 15 0 0 1-13 15l-7-7z" fill="#0b2740"/><path d="M10 7h11q2 0 2 2v15H10z" fill="#b9461f"/><path d="M10 9h7v4h-7z" fill="#f07d33"/><path d="M11 15v9m-3.500-3.500L11 24.500l3.500-4" fill="none" stroke="#d5eefb" stroke-width="1.800"/></svg>Load Last</button>
<button style="width:60px"><svg width="30" height="30" viewBox="0 0 30 30"><circle cx="15" cy="15" r="15" fill="#f2806e"/><path d="M6 7h18v19H6z" fill="#d4574a"/><path d="M8 8h14v16H8z" fill="#fff"/><path d="M12 5h6v4h-6z" fill="#f9c33c"/><path d="M10 13h10M10 16h10M10 19h10M10 22h6" stroke="#9cc8e8" stroke-width="1.200"/></svg>Templates</button>
<button style="width:47px"><svg width="30" height="30" viewBox="0 0 30 30"><circle cx="15" cy="15" r="15" fill="#fb8c26"/><path d="m22 9 8 7a15 15 0 0 1-12 14l-9-8z" fill="#e06c10"/><path d="M8 8h12l2.500 2.500V22H8z" fill="#3b3b45"/><path d="M11 8h7v5h-7zM11 16h8v6h-8z" fill="#f4f4f4"/><path d="M15 9h2v3h-2z" fill="#3b3b45"/></svg>Save As</button>
</div></div>
<div class="tree edge d-flex" style="margin:0 7px">
<ul class="flex-fill">
<li><div class="node-h first"><svg class="tri" width="6" height="6"><use href="#tri"/></svg><div class="node-line"><h3>Review of Systems</h3></div><div class="acts"><button aria-label="Comment"><svg width="20" height="18" class="mb-1"><use href="#note"/></svg></button><button aria-label="Add"><svg width="20" height="20"><use href="#plus"/></svg></button></div></div><div class="node lv1"><span class="ln"></span></div></li>
<li><div class="node-h"><svg class="tri" width="6" height="6"><use href="#tri"/></svg><div class="node-line"><h3>Medications</h3></div><div class="acts"><button aria-label="Comment"><svg width="20" height="18" class="mb-1"><use href="#note"/></svg></button><button aria-label="Add"><svg width="20" height="20"><use href="#plus"/></svg></button></div></div><div class="node lv1"><span class="ln"></span></div></li>
<li><div class="node-h"><svg class="tri" width="6" height="6"><use href="#tri"/></svg><div class="node-line"><h3>Orders</h3></div><div class="acts"><button aria-label="Comment"><svg width="20" height="18" class="mb-1"><use href="#note"/></svg></button><button aria-label="Add"><svg width="20" height="20"><use href="#plus"/></svg></button></div></div><div class="node lv1"><span class="ln"></span></div></li>
<li><div class="node-h"><svg class="tri" width="6" height="6"><use href="#tri"/></svg><div class="node-line"><h3>Past History</h3></div><div class="acts"><button aria-label="Comment"><svg width="20" height="18" class="mb-1"><use href="#note"/></svg></button><button aria-label="Add"><svg width="20" height="20"><use href="#plus"/></svg></button></div></div><div class="node"></div></li>
<li class="focus-group"><div class="node-h"><svg class="tri" width="6" height="6"><use href="#tri"/></svg><div class="node-line"><h3 class="text-black">Physical Exam</h3></div><div class="acts"><button aria-label="Comment"><svg width="20" height="18" class="mb-1"><use href="#note"/></svg></button><button aria-label="Add"><svg width="20" height="20"><use href="#plus"/></svg></button></div></div>
<div class="node lv1 tw"><svg class="tri" width="6" height="6"><use href="#tri"/></svg><span class="ln">General Apearance</span></div>
<div class="node lv2"><span class="ln">oriented, alert, and no acute distress</span></div>
<div class="node lv2"><span class="ln">well developed</span></div>
<div class="node lv2 tw"><svg class="tri" width="6" height="6"><use href="#tri"/></svg><span class="ln">active</span></div>
<div class="node lv3"><span class="ln bare">Normal</span></div>
<div class="focus-frame"></div></li>
<li><div class="node-h"><svg class="tri" width="6" height="6"><use href="#tri"/></svg><div class="node-line"><h3>Adult Quality Measures*</h3></div><div class="acts"><button aria-label="Comment"><svg width="20" height="18" class="mb-1"><use href="#note"/></svg></button><button aria-label="Add"><svg width="20" height="20"><use href="#plus"/></svg></button></div></div></li>
</ul>
<div class="sbar flex-shrink-0" style="margin:1px"><button aria-label="Up"><svg width="7" height="4"><use href="#up"/></svg></button><div style="flex:102"></div><div class="thumb border-top" style="flex:201"></div><div style="flex:51"></div><button aria-label="Down"><svg width="7" height="4"><use href="#dn"/></svg></button></div>
</div>
</section>
<section class="edge flex-fill" style="min-height:0;overflow:hidden">
<div class="panel-title" style="height:34px"><span class="me-auto">Assessment / Plan</span><button aria-label="Pin"><svg width="8" height="9"><use href="#pin"/></svg></button><button class="tool-x" aria-label="Close"><svg width="9" height="9"><use href="#ex"/></svg></button></div>
<div class="ap-head d-flex align-items-center" style="height:29px;padding-bottom:2px"><label for="as" class="me-auto pt-1">Assessment</label><span class="me-1" style="font-size:12px">Note</span><button class="edge pickfont d-flex align-items-center justify-content-between pe-1" style="margin-right:13px" aria-label="Font"><svg width="16" height="13"><use href="#fontpg"/></svg><svg width="8" height="5"><use href="#dn"/></svg></button><button aria-label="Refresh"><svg width="20" height="20"><use href="#redo"/></svg></button></div>
<div class="ap-box"><textarea id="as">Male patient of 30 year(s) old. Items found were:  Crustacean</textarea></div>
<div class="ap-head d-flex align-items-center" style="height:33px"><label for="pl" class="me-auto pt-1">Plan</label><span class="me-1" style="font-size:12px">Note</span><button class="edge pickfont d-flex align-items-center justify-content-between pe-1" style="margin-right:7px" aria-label="Font"><svg width="16" height="13"><use href="#fontpg"/></svg><svg width="8" height="5"><use href="#dn"/></svg></button><button aria-label="Refresh"><svg width="20" height="20"><use href="#redo"/></svg></button></div>
<div class="ap-box"><textarea id="pl">   Patient instructed to return as necessary.</textarea></div>
</section>
</div>
</main>
<nav class="tabs-v d-flex flex-shrink-0"><span>Smart Box</span><span>Clinical Alerts</span><span>Tele Medicine</span></nav>
</div>
</div>
<script src="https://cdn.jsdelivr.net/npm/bootstrap@5.3.0/dist/js/bootstrap.bundle.min.js"></script>
</body>
</html>
